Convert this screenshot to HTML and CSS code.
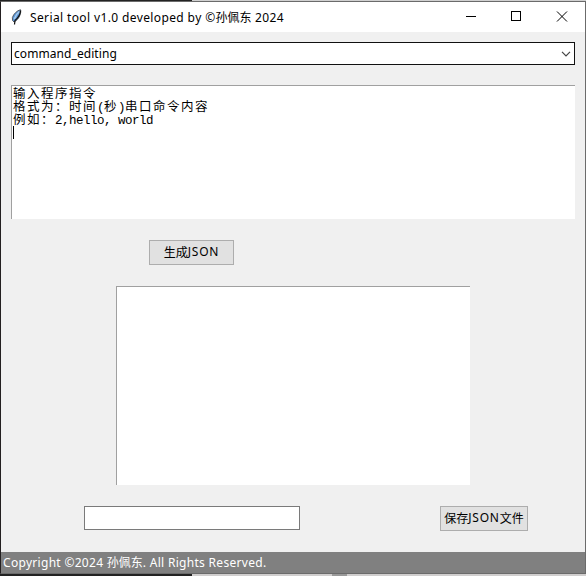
FILE: index.html
```
<!DOCTYPE html>
<html lang="zh-CN">
<head>
<meta charset="utf-8">
<title>Serial tool</title>
<link rel="stylesheet" href="styles.css">
</head>
<body>
<div class="backdrop backdrop-top"></div>
<main class="window">
  <header class="titlebar">
    <svg class="feather" width="12" height="16" viewBox="0 0 12 16">
      <path d="M9.500 .7C6 1.500 2.500 5 1.400 8.500L1.500 11.500L3 13C6 11.500 8 9 9 6C9.800 4 10 2 9.500 .7Z" fill="#5b95d6" stroke="#444" stroke-width=".8"/>
      <path d="M8.500 2.500C6.500 4 4.300 7 3.300 10" fill="none" stroke="#a9ccec" stroke-width="1.500"/>
      <path d="M9.500 1.500C9.500 5 7.500 8.500 4 11.500L3.500 15.500" fill="none" stroke="#111" stroke-width="1.200"/>
    </svg>
    <h1 class="title"><span class="wide">Serial tool v1.0 developed by ©</span><span class="cjk">孙佩东</span><span class="wide"> 2024</span></h1>
    <svg class="controls" width="104" height="12" viewBox="0 0 104 12" fill="none" stroke="#000">
      <path d="M0 5.500H10"/>
      <rect x="45.500" y=".5" width="9" height="9"/>
      <path d="M91 .5L101 10.500M101 .5L91 10.500"/>
    </svg>
  </header>
  <section class="content">
    <div class="select"><span class="select-text">command_editing</span>
      <svg width="10" height="6" viewBox="0 0 10 6" fill="none" stroke="#444" stroke-width="1.200"><path d="M1 .8L5 4.800L9 .8"/></svg>
    </div>
    <div class="editor sunken">
      <div>输入程序指令</div>
      <div>格式为：时间<span class="mono">(</span>秒<span class="mono">)</span>串口命令内容</div>
      <div>例如：<span class="mono">2,hello, world</span></div>
      <div class="caret"></div>
    </div>
    <button class="button generate">生成<span class="json">JSON</span></button>
    <div class="output sunken"></div>
    <div class="save-row">
      <input class="filename" type="text">
      <button class="button save">保存<span class="json">JSON</span>文件</button>
    </div>
  </section>
  <footer class="footer"><span>Copyright ©2024 </span><span class="cjk">孙佩东</span><span>. All Rights Reserved.</span></footer>
</main>
<div class="backdrop backdrop-bottom"></div>
</body>
</html>
```
FILE: styles.css
```
* { box-sizing: border-box; }
body {
  margin: 0;
  width: 586px;
  height: 576px;
  overflow: hidden;
  display: flex;
  flex-direction: column;
  font: 12px/16px "Noto Sans", "Noto Sans CJK SC", sans-serif;
  color: #000;
}
.backdrop-top { height: 1px; background: linear-gradient(90deg, #222 0 192px, #d0d0d0 192px); }
.backdrop-bottom { height: 2px; background: linear-gradient(90deg, #222 0 192px, #d0cece 192px 332px, #999 332px 347px, #d0cece 347px); }
.window {
  height: 573px;
  display: flex;
  flex-direction: column;
  border: 1px solid #6b6b6b;
  border-left-color: #231f20;
  background: #f0f0f0;
}
.titlebar {
  height: 30px;
  display: flex;
  align-items: center;
  background: #fff;
  padding: 0 15px 0 10px;
}
.feather { margin-right: 7px; }
.title { margin: 0; font: inherit; white-space: pre; }
.wide { letter-spacing: .38px; }
.controls { margin-left: auto; }
.cjk { font-family: "Noto Sans CJK SC", sans-serif; letter-spacing: 0; }
.content { height: 520px; padding: 10px; display: flex; flex-direction: column; }
.select {
  height: 23px;
  border: 1px solid #111;
  background: #fff;
  display: flex;
  align-items: center;
  justify-content: space-between;
  padding: 0 3px 0 2px;
}
.select-text { letter-spacing: .07px; }
.sunken {
  background: #fff;
  border: 0 solid #a0a0a0;
  border-width: 1px 0 0 1px;
}
.editor {
  margin-top: 20px;
  height: 134px;
  padding: 0 1px;
  font: 12.5px/13px "Noto Sans CJK SC", sans-serif;
  letter-spacing: 1.5px;
}
.editor > div { height: 13px; white-space: pre; }
.mono { font: 12.5px/12px "Liberation Mono", monospace; letter-spacing: -.5px; }
.editor > .caret { width: 1px; margin-top: 1px; background: #000; }
.button {
  display: flex;
  align-items: center;
  justify-content: center;
  height: 25px;
  padding: 0 0 1px;
  border: 1px solid #adadad;
  background: #e1e1e1;
  color: #000;
  font: 12px/16px "Noto Sans CJK SC", sans-serif;
  white-space: nowrap;
}
.json { font-family: "Noto Sans", sans-serif; letter-spacing: .8px; }
.generate { width: 85px; margin: 21px 0 0 138px; }
.output { width: 354px; height: 199px; margin: 21px 0 0 105px; }
.save-row { display: flex; justify-content: space-between; margin: 21px 47px 0 73px; }
.filename { width: 216px; height: 24px; border: 1px solid #7a7a7a; background: #fff; padding: 0 2px; }
.save { width: 88px; }
.footer {
  height: 21px;
  padding: 2px 2px 0;
  background: #808080;
  color: #fff;
  white-space: pre;
  letter-spacing: .3px;
}
```
